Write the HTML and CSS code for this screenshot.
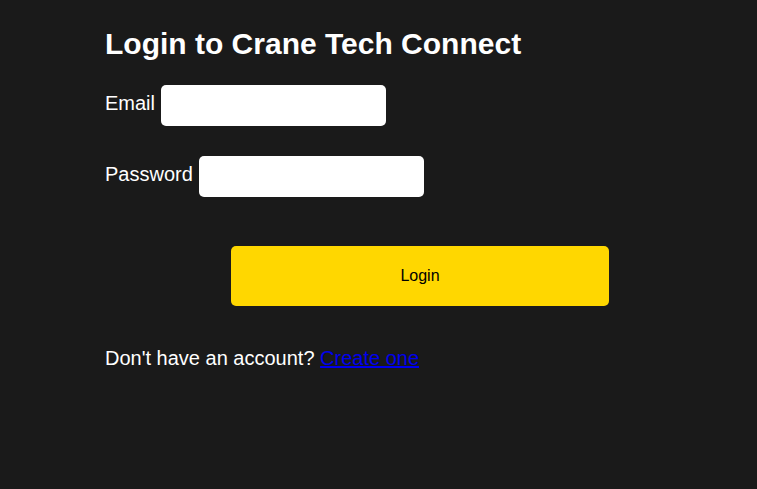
FILE: index.html
```html
<!DOCTYPE html>
<html lang="en">
<head>
<meta charset="utf-8">
<title>Login to Crane Tech Connect</title>
<link rel="stylesheet" href="styles.css">
</head>
<body>
<main class="page">
  <h1 class="title">Login to Crane Tech Connect</h1>
  <form class="login-form" onsubmit="return false;">
    <div class="field">
      <label class="field-label" for="email">Email</label>
      <input class="field-input" id="email" type="email">
    </div>
    <div class="field">
      <label class="field-label" for="password">Password</label>
      <input class="field-input" id="password" type="password">
    </div>
    <button class="login-btn" type="submit">Login</button>
  </form>
  <p class="signup">Don't have an account? <a class="signup-link" href="#">Create one</a></p>
</main>
</body>
</html>
```

FILE: styles.css
```css
html, body {
  background: #1a1a1a;
}
body {
  margin: 8px;
  font-family: "Liberation Sans", Arial, sans-serif;
  color: #ffffff;
}
.page {
  width: 630px;
  padding: 19px 0 0 97px;
  display: flex;
  flex-direction: column;
}
.title {
  margin: 0;
  font-size: 30px;
  font-weight: bold;
  line-height: normal;
}
.login-form {
  display: flex;
  flex-direction: column;
  margin-top: 24px;
}
.field {
  display: flex;
  align-items: center;
  gap: 6px;
  margin-bottom: 30px;
}
.field-label {
  font-size: 20px;
  line-height: 23px;
  margin-bottom: 4px;
}
.field-input {
  box-sizing: border-box;
  width: 225px;
  height: 41px;
  border: none;
  border-radius: 5px;
  background: #ffffff;
  padding: 0 10px;
  font-size: 16px;
  outline: none;
}
.login-btn {
  box-sizing: border-box;
  align-self: center;
  width: 378px;
  height: 60px;
  margin-top: 19px;
  border: none;
  border-radius: 5px;
  background: #ffd700;
  color: #000000;
  font-family: "Liberation Sans", Arial, sans-serif;
  font-size: 16px;
  cursor: pointer;
}
.signup {
  margin: 41px 0 0;
  font-size: 20px;
  line-height: 23px;
}
.signup-link {
  color: #0000ee;
}
```
